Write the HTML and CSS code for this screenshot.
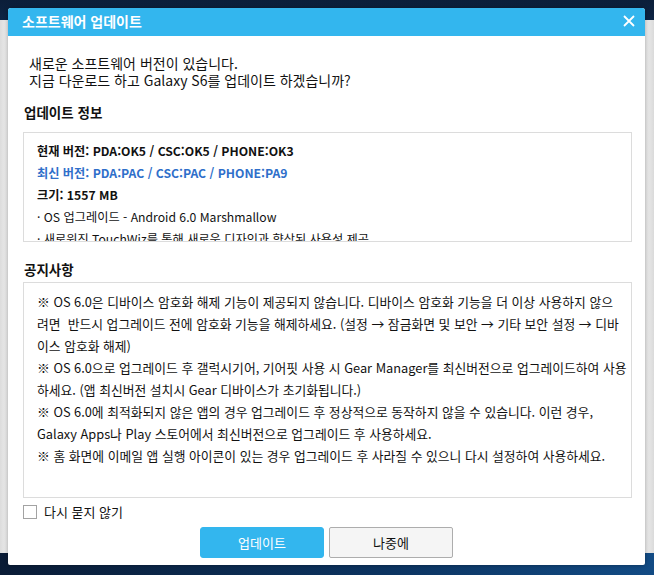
FILE: index.html
```html
<!DOCTYPE html>
<html lang="ko">
<head>
  <meta charset="UTF-8">
  <meta name="viewport" content="width=device-width, initial-scale=1.0">
  <title>소프트웨어 업데이트</title>
  <link rel="stylesheet" href="styles.css">
</head>
<body>
  <div class="dialog">
    <div class="title-bar">
      <span class="title">소프트웨어 업데이트</span>
      <button class="close" aria-label="닫기">
        <svg width="12" height="12" viewBox="0 0 12 12"><path d="M1 1 L11 11 M11 1 L1 11" stroke="#fff" stroke-width="1.8" fill="none"/></svg>
      </button>
    </div>

    <div class="content">
      <p class="intro">새로운 소프트웨어 버전이 있습니다.<br>지금 다운로드 하고 Galaxy S6를 업데이트 하겠습니까?</p>

      <h2 class="section first">업데이트 정보</h2>
      <div class="box info">
        <div class="bold">현재 버전: PDA:OK5 / CSC:OK5 / PHONE:OK3</div>
        <div class="bold latest">최신 버전: PDA:PAC / CSC:PAC / PHONE:PA9</div>
        <div class="bold">크기: 1557 MB</div>
        <div>· OS 업그레이드 - Android 6.0 Marshmallow</div>
        <div>· 새로워진 TouchWiz를 통해 새로운 디자인과 향상된 사용성 제공</div>
        <div>· Doze 모드를 통한 배터리 사용 시간 향상</div>
        <div>· 앱 권한 관리 기능 추가</div>
        <div>· 보안 기능 강화</div>
        <div>· 시스템 안정성 개선</div>
      </div>

      <h2 class="section">공지사항</h2>
      <div class="box notice">
        ※ OS 6.0은 디바이스 암호화 해제 기능이 제공되지 않습니다. 디바이스 암호화 기능을 더 이상 사용하지 않으<br>려면&nbsp; 반드시 업그레이드 전에 암호화 기능을 해제하세요. (설정 → 잠금화면 및 보안 → 기타 보안 설정 → 디바<br>이스 암호화 해제)<br>
        ※ OS 6.0으로 업그레이드 후 갤럭시기어, 기어핏 사용 시 Gear Manager를 최신버전으로 업그레이드하여 사용<br>하세요. (앱 최신버전 설치시 Gear 디바이스가 초기화됩니다.)<br>
        ※ OS 6.0에 최적화되지 않은 앱의 경우 업그레이드 후 정상적으로 동작하지 않을 수 있습니다. 이런 경우,<br>Galaxy Apps나 Play 스토어에서 최신버전으로 업그레이드 후 사용하세요.<br>
        ※ 홈 화면에 이메일 앱 실행 아이콘이 있는 경우 업그레이드 후 사라질 수 있으니 다시 설정하여 사용하세요.
      </div>

      <label class="check">
        <input type="checkbox">
        <span class="check-box"></span>
        다시 묻지 않기
      </label>

      <div class="actions">
        <button class="btn primary">업데이트</button>
        <button class="btn">나중에</button>
      </div>
    </div>
  </div>
</body>
</html>
```

FILE: styles.css
```css
html, body {
  margin: 0;
  height: 100%;
}

body {
  font-family: "Noto Sans CJK KR", "Noto Sans", sans-serif;
  font-size: 13px;
  color: #111;
  background:
    linear-gradient(to right, #0a1c36, #0c3461 60%, #124b84) left bottom / 100% 22px no-repeat,
    linear-gradient(#0b1e39, #0d2444) left top / 100% 20px no-repeat,
    linear-gradient(to right, #dcdcdc, #efefef 8px, #efefef calc(100% - 9px), #dadada);
  overflow: hidden;
}

.dialog {
  margin: 8px 0 0 8px;
  width: 637px;
  height: 557px;
  background: #fff;
  border-radius: 3px 3px 2px 2px;
  box-shadow: 0 0 4px rgba(0, 0, 0, 0.35);
  display: flex;
  flex-direction: column;
}

.title-bar {
  height: 28px;
  background: #33b6ee;
  border-radius: 3px 3px 0 0;
  display: flex;
  align-items: center;
  justify-content: space-between;
  padding: 0 10px 2px 14px;
  box-sizing: border-box;
}

.title {
  color: #fff;
  font-weight: bold;
  font-size: 14px;
}

.close {
  background: none;
  border: none;
  padding: 0;
  width: 12px;
  height: 12px;
  display: flex;
}

.content {
  padding: 0 13px 0 15px;
  display: flex;
  flex-direction: column;
}

.intro {
  margin: 19px 0 0 6px;
  line-height: 17px;
  font-size: 14px;
}

.section {
  margin: 19px 0 0 1px;
  font-size: 13.5px;
  font-weight: bold;
  line-height: 17px;
}

.section.first {
  margin-top: 15px;
}

.box {
  border: 1px solid #dcdcdc;
  box-sizing: border-box;
  line-height: 22px;
}

.info {
  margin-top: 11px;
  height: 110px;
  padding: 7px 0 0 13px;
  font-size: 12.2px;
  overflow-y: scroll;
}

.info::-webkit-scrollbar {
  width: 11px;
}

.info::-webkit-scrollbar-track {
  background: #d5d8e0;
}

.info::-webkit-scrollbar-thumb {
  background: #a5a8ab;
  border-radius: 3px;
}

.bold {
  font-weight: bold;
}

.latest {
  color: #2f6fca;
}

.notice {
  margin-top: 4px;
  height: 216px;
  padding: 8px 0 0 13px;
  font-size: 12.8px;
}

.check {
  margin-top: 7px;
  display: flex;
  align-items: center;
  gap: 7px;
  line-height: 14px;
}

.check input {
  display: none;
}

.check-box {
  width: 14px;
  height: 14px;
  box-sizing: border-box;
  border: 1px solid #a3a3a3;
  background: #fff;
}

.actions {
  margin-top: 8px;
  display: flex;
  justify-content: center;
  gap: 5px;
  padding-right: 2px;
}

.btn {
  width: 124px;
  height: 31px;
  font-family: inherit;
  font-size: 13px;
  border: 1px solid #adadad;
  border-radius: 2px;
  background: #f5f5f5;
  color: #111;
}

.btn.primary {
  border-color: #33b6ee;
  background: #33b6ee;
  color: #fff;
  border-radius: 3px;
}
```
